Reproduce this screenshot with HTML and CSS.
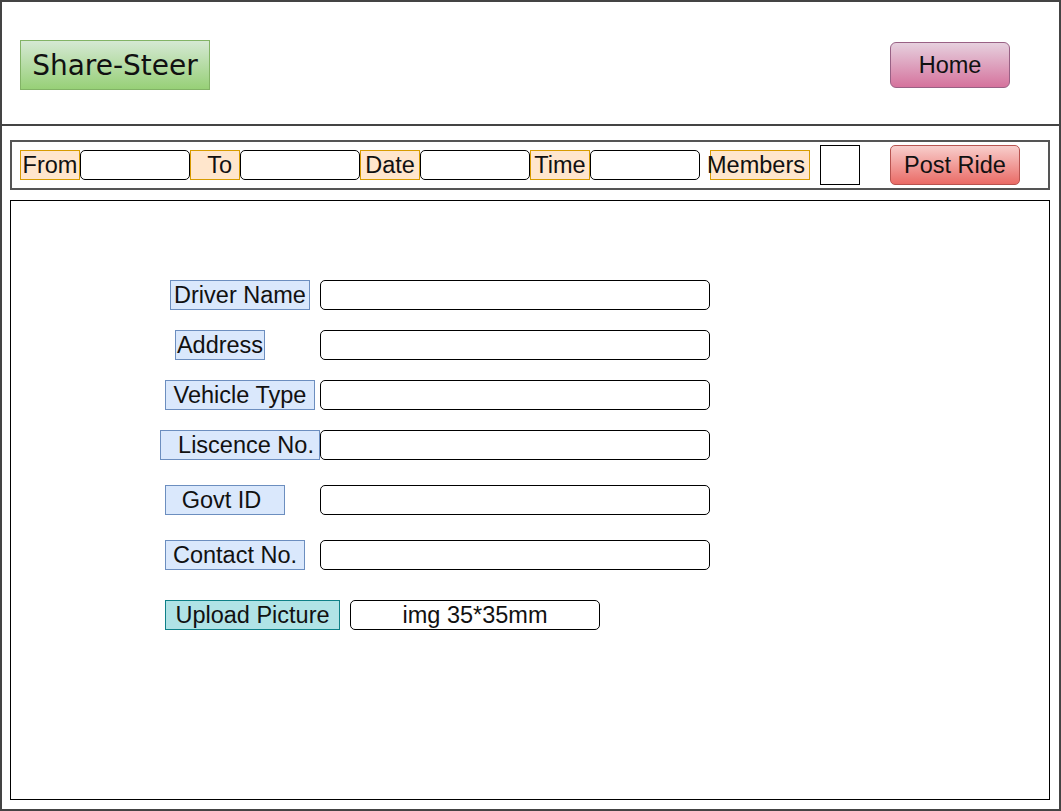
FILE: index.html
```html
<!DOCTYPE html>
<html>
<head>
<meta charset="utf-8">
<title>Share-Steer</title>
<link rel="stylesheet" href="styles.css">
</head>
<body>
<div class="frame">
  <header class="header">
    <div class="logo">Share-Steer</div>
    <div class="btn home">Home</div>
  </header>
  <div class="content">
    <div class="toolbar">
      <span class="tlabel t-from">From</span><span class="tinput t-w110"></span><span class="tlabel t-to">To</span><span class="tinput t-w120"></span><span class="tlabel t-date">Date</span><span class="tinput t-w110"></span><span class="tlabel t-time">Time</span><span class="tinput t-w110"></span><span class="tlabel t-members">Members</span><span class="tbox"></span><span class="btn post">Post Ride</span>
    </div>
    <main class="panel">
      <div class="form">
        <div class="row"><span class="flabel l-driver">Driver Name</span><span class="finput"></span></div>
        <div class="row g20"><span class="flabel l-address">Address</span><span class="finput"></span></div>
        <div class="row g20"><span class="flabel l-vehicle">Vehicle Type</span><span class="finput"></span></div>
        <div class="row g20"><span class="flabel l-licence">Liscence No.</span><span class="finput"></span></div>
        <div class="row g25"><span class="flabel l-govt">Govt ID</span><span class="finput"></span></div>
        <div class="row g25"><span class="flabel l-contact">Contact No.</span><span class="finput"></span></div>
        <div class="row g30"><span class="flabel upload">Upload Picture</span><span class="finput img">img 35*35mm</span></div>
      </div>
    </main>
  </div>
</div>
</body>
</html>
```

FILE: styles.css
```css
* { box-sizing: border-box; }
html, body { margin: 0; padding: 0; background: #fff; }
body { font-family: "Liberation Sans", Arial, sans-serif; font-size: 23.5px; color: #111; }

.frame {
  width: 1061px;
  height: 811px;
  border: 2px solid #444;
  display: flex;
  flex-direction: column;
}

.header {
  height: 124px;
  border-bottom: 2px solid #444;
  display: flex;
  justify-content: space-between;
  align-items: flex-start;
  padding: 38px 49px 0 18px;
  flex: none;
}

.logo {
  width: 190px;
  height: 50px;
  border: 1px solid #82b366;
  background: linear-gradient(to bottom, #d5e8d4, #97d077);
  font-family: "DejaVu Sans", Verdana, sans-serif;
  font-size: 28px;
  line-height: 50px;
  text-align: center;
  color: #111;
}

.btn {
  display: inline-block;
  text-align: center;
  border-radius: 6px;
  color: #111;
}
.home {
  margin-top: 2px;
  width: 120px;
  height: 46px;
  line-height: 44px;
  border: 1px solid #996185;
  background: linear-gradient(to bottom, #e6d0de, #d5739d);
}

.content {
  flex: 1;
  padding: 14px 9px 0 8px;
  display: flex;
  flex-direction: column;
}

.toolbar {
  height: 50px;
  border: 2px solid #555;
  display: flex;
  align-items: center;
  padding-left: 8px;
  flex: none;
}
.tlabel {
  height: 30px;
  line-height: 28px;
  border: 1px solid #d79b00;
  background: #ffe6cc;
  text-align: center;
  white-space: nowrap;
  flex: none;
}
.t-from { width: 60px; }
.t-to { width: 50px; text-align: right; padding-right: 7px; }
.t-date { width: 60px; }
.t-time { width: 60px; }
.t-members { width: 100px; margin-left: 10px; text-indent: -8px; }
.tinput {
  height: 30px;
  border: 1px solid #000;
  border-radius: 5px;
  background: #fff;
  flex: none;
}
.t-w110 { width: 110px; }
.t-w120 { width: 120px; }
.tbox {
  width: 40px;
  height: 40px;
  border: 1px solid #000;
  margin-left: 10px;
  flex: none;
}
.post {
  margin-left: 30px;
  width: 130px;
  height: 40px;
  line-height: 38px;
  border: 1px solid #b85450;
  border-radius: 5px;
  background: linear-gradient(to bottom, #f8cecc, #ea6b66);
  flex: none;
}

.panel {
  margin-top: 10px;
  height: 600px;
  border: 1px solid #000;
  flex: none;
}

.form {
  display: flex;
  flex-direction: column;
  padding-top: 79px;
}
.row {
  display: flex;
  height: 30px;
}
.g20 { margin-top: 20px; }
.g25 { margin-top: 25px; }
.g30 { margin-top: 30px; }

.flabel {
  height: 30px;
  line-height: 28px;
  border: 1px solid #6c8ebf;
  background: #dae8fc;
  text-align: center;
  white-space: nowrap;
  flex: none;
}
.l-driver { margin-left: 159px; width: 140px; margin-right: 10px; }
.l-address { margin-left: 164px; width: 90px; margin-right: 55px; }
.l-vehicle { margin-left: 154px; width: 150px; margin-right: 5px; }
.l-licence { margin-left: 149px; width: 160px; margin-right: 0; padding-left: 12px; }
.l-govt { margin-left: 154px; width: 120px; margin-right: 35px; padding-right: 7px; }
.l-contact { margin-left: 154px; width: 140px; margin-right: 15px; }
.upload {
  margin-left: 154px;
  width: 175px;
  margin-right: 10px;
  border-color: #0e8088;
  background: #b0e3e6;
}

.finput {
  width: 390px;
  height: 30px;
  border: 1px solid #000;
  border-radius: 5px;
  background: #fff;
  flex: none;
}
.finput.img {
  width: 250px;
  line-height: 28px;
  text-align: center;
}
```
